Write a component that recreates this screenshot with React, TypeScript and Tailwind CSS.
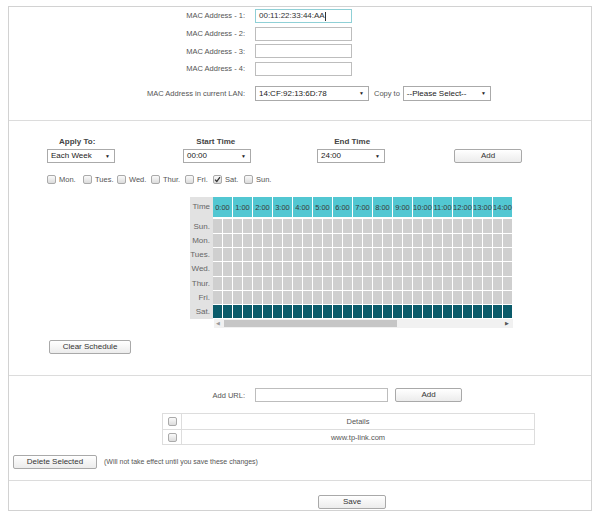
import React from "react";

const font = { fontFamily: '"Liberation Sans", Arial, sans-serif' };

function Input({ w, value, focused }: { w: number; value?: string; focused?: boolean }) {
  return (
    <div
      className={`h-[14px] border bg-white flex items-center pl-[3px] text-[8px] text-[#333] ${
        focused ? "border-[#8fd0d6]" : "border-[#bdbdbd]"
      }`}
      style={{ width: w }}
    >
      {value}
      {focused && <span className="inline-block w-[1px] h-[9px] bg-[#333] ml-[0.5px]" />}
    </div>
  );
}

function Select({ w, value, h = 14 }: { w: number; value: string; h?: number }) {
  return (
    <div
      className="border border-[#aaa] bg-white flex items-center justify-between pl-[3px] pr-[4px] text-[8px] text-[#222]"
      style={{ width: w, height: h }}
    >
      <span>{value}</span>
      <span className="text-[5px] text-[#222]">▼</span>
    </div>
  );
}

function Button({ w, children }: { w: number; children: React.ReactNode }) {
  return (
    <div
      className="h-[14px] border border-[#a9a9a9] rounded-[2px] bg-gradient-to-b from-white to-[#ececec] flex items-center justify-center text-[8px] text-[#333]"
      style={{ width: w }}
    >
      {children}
    </div>
  );
}

function Check({ checked }: { checked?: boolean }) {
  return (
    <div className="w-[9px] h-[9px] shrink-0 border border-[#aaa] rounded-[2px] bg-gradient-to-b from-[#fafafa] to-[#dcdcdc] flex items-center justify-center">
      {checked && (
        <svg width="7" height="7" viewBox="0 0 7 7">
          <path d="M1 3.6 L2.8 5.4 L6 1.2" stroke="#333" strokeWidth="1.3" fill="none" />
        </svg>
      )}
    </div>
  );
}

const hours = Array.from({ length: 15 }, (_, i) => `${i}:00`);
const days = ["Sun.", "Mon.", "Tues.", "Wed.", "Thur.", "Fri.", "Sat."];

function Schedule() {
  return (
    <div className="ml-[181px] w-[323px] overflow-hidden">
      <div className="flex">
        <div className="w-[24px] flex flex-col bg-[#e2e2e2]">
          <div className="h-[22px] flex items-center justify-end pr-[3px] text-[8px] text-[#666] pb-[2px]">Time</div>
          {days.map((d) => (
            <div key={d} className="h-[14.3px] flex items-center justify-end pr-[3px] text-[8px] text-[#666]">
              {d}
            </div>
          ))}
        </div>
        <div className="flex flex-col">
          <div className="flex h-[20px] mb-[2px]">
            {hours.map((h) => (
              <div
                key={h}
                className="w-[20px] h-[20px] bg-[#52c7d2] border-r border-white flex items-center justify-center text-[7.5px] text-[#3a3a3a]"
              >
                {h}
              </div>
            ))}
          </div>
          {days.map((d) => (
            <div key={d} className="flex h-[14.3px] pb-[1px]">
              {hours.map((h) => (
                <div key={h} className="flex w-[20px] gap-[1px] pr-[1px]">
                  <div className={`w-[9px] h-full ${d === "Sat." ? "bg-[#0a5b6a]" : "bg-[#cfcfcf]"}`} />
                  <div className={`w-[9px] h-full ${d === "Sat." ? "bg-[#0a5b6a]" : "bg-[#cfcfcf]"}`} />
                </div>
              ))}
            </div>
          ))}
        </div>
      </div>
      <div className="ml-[24px] h-[9px] bg-[#f1f1f1] flex items-center relative">
        <span className="text-[5px] text-[#999] ml-[2px]">◀</span>
        <div className="h-[7px] bg-[#c6c6c6] ml-[4px] w-[173px]" />
        <span className="text-[5px] text-[#555] ml-auto mr-[4px]">▶</span>
      </div>
    </div>
  );
}

export default function App() {
  const macRows = [
    { label: "MAC Address - 1:", value: "00:11:22:33:44:AA", focused: true },
    { label: "MAC Address - 2:" },
    { label: "MAC Address - 3:" },
    { label: "MAC Address - 4:" },
  ];
  const dayItems: [string, number, boolean][] = [
    ["Mon.", 36, false],
    ["Tues.", 34, false],
    ["Wed.", 34, false],
    ["Thur.", 34, false],
    ["Fri.", 28, false],
    ["Sat.", 31, true],
    ["Sun.", 34, false],
  ];
  return (
    <div className="w-[597px] h-[515px] bg-white pt-[6px] pl-[8px]" style={font}>
      <div className="w-[584px] h-[505px] border border-[#d2d2d2] flex flex-col text-[#555]">
        {/* Section 1 */}
        <div className="pt-[2px] pb-[19px] flex flex-col gap-[3.6px] border-b border-[#dcdcdc]">
          {macRows.map((r) => (
            <div key={r.label} className="flex items-center">
              <div className="w-[236px] text-right text-[7.5px] text-[#555]">{r.label}</div>
              <div className="ml-[10px]">
                <Input w={97} value={r.value} focused={r.focused} />
              </div>
            </div>
          ))}
          <div className="flex items-center mt-[7px]">
            <div className="w-[236px] text-right text-[7.5px] text-[#555]">MAC Address in current LAN:</div>
            <div className="ml-[10px]">
              <Select w={114} value="14:CF:92:13:6D:78" h={15} />
            </div>
            <span className="ml-[5px] text-[7.5px] text-[#555]">Copy to</span>
            <div className="ml-[3px]">
              <Select w={88} value="--Please Select--" h={15} />
            </div>
          </div>
        </div>

        {/* Section 2 */}
        <div className="pt-[16px] pb-[21px] flex flex-col border-b border-[#dcdcdc]">
          <div className="flex h-[9px] items-center text-[8px] font-bold text-[#444]">
            <span className="ml-[50px]">Apply To:</span>
            <span className="ml-[101px]">Start Time</span>
            <span className="ml-[99px]">End Time</span>
          </div>
          <div className="flex mt-[3px] items-center">
            <div className="ml-[38px]">
              <Select w={68} value="Each Week" />
            </div>
            <div className="ml-[68px]">
              <Select w={68} value="00:00" />
            </div>
            <div className="ml-[66px]">
              <Select w={68} value="24:00" />
            </div>
            <div className="ml-[69px]">
              <Button w={68}>Add</Button>
            </div>
          </div>
          <div className="flex mt-[12px] ml-[38px] h-[9px] items-center">
            {dayItems.map(([d, w, c]) => (
              <div key={d} className="flex items-center h-[9px]" style={{ width: w }}>
                <Check checked={c} />
                <span className="ml-[3px] text-[7.5px] leading-[9px] text-[#555]">{d}</span>
              </div>
            ))}
          </div>
          <div className="mt-[13px]">
            <Schedule />
          </div>
          <div className="mt-[12px] ml-[40px]">
            <Button w={82}>
              <span className="text-[#333]">Clear Schedule</span>
            </Button>
          </div>
        </div>

        {/* Section 3 */}
        <div className="pt-[12px] pb-[11px] flex flex-col border-b border-[#dcdcdc]">
          <div className="flex items-center">
            <div className="w-[236px] text-right text-[7.5px] text-[#555]">Add URL:</div>
            <div className="ml-[10px]">
              <Input w={133} />
            </div>
            <div className="ml-[7px]">
              <Button w={67}>Add</Button>
            </div>
          </div>
          <div className="mt-[11px] ml-[153px] w-[373px] border border-[#ddd] text-[7.5px] text-[#555]">
            <div className="flex h-[16px] border-b border-[#ddd]">
              <div className="w-[19px] border-r border-[#ddd] flex items-center justify-center">
                <Check />
              </div>
              <div className="flex-1 flex items-center justify-center">Details</div>
            </div>
            <div className="flex h-[14px]">
              <div className="w-[19px] border-r border-[#ddd] flex items-center justify-center">
                <Check />
              </div>
              <div className="flex-1 flex items-center justify-center">www.tp-link.com</div>
            </div>
          </div>
          <div className="mt-[10px] ml-[4px] flex items-center">
            <Button w={84}>Delete Selected</Button>
            <span className="ml-[7px] text-[7px] text-[#555]">(Will not take effect until you save these changes)</span>
          </div>
        </div>

        {/* Section 4 */}
        <div className="pt-[14px] flex">
          <div className="ml-[309px]">
            <Button w={68}>Save</Button>
          </div>
        </div>
      </div>
    </div>
  );
}
